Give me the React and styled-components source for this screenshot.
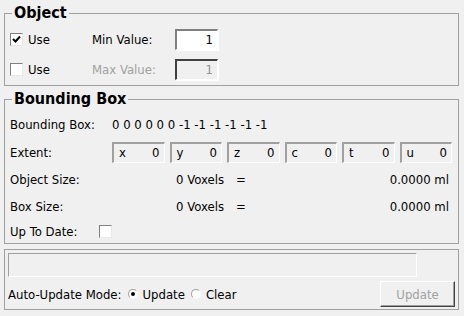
import styled, { createGlobalStyle } from "styled-components";

const GlobalStyle = createGlobalStyle`
  html, body {
    margin: 0;
    background: #f0f0f0;
  }
  body {
    font-family: "DejaVu Sans Condensed", "DejaVu Sans", Tahoma, sans-serif;
    font-size: 13px;
    color: #000;
  }
`;

const EXTENT = ["x", "y", "z", "c", "t", "u"];

function CheckBox({ checked }) {
  return (
    <Check>
      {checked && (
        <svg width="9" height="9" viewBox="0 0 9 9">
          <path d="M1 4 L3.5 6.5 L8 1.5" fill="none" stroke="#000" strokeWidth="2" />
        </svg>
      )}
    </Check>
  );
}

function App() {
  return (
    <Page>
      <GlobalStyle />

      <Group $pad="7px 5px 5px 5px" $gap={4}>
        <Legend>Object</Legend>
        <FormRow>
          <UseCell>
            <CheckBox checked />
            <span>Use</span>
          </UseCell>
          <FieldLabel>Min Value:</FieldLabel>
          <NumInput>1</NumInput>
        </FormRow>
        <FormRow>
          <UseCell>
            <CheckBox />
            <span>Use</span>
          </UseCell>
          <FieldLabel $disabled>Max Value:</FieldLabel>
          <NumInput $disabled>1</NumInput>
        </FormRow>
      </Group>

      <Group $pad="2px 5px 0 5px" $gap={5}>
        <Legend>Bounding Box</Legend>
        <InfoRow $h={28}>
          <RowLabel>Bounding Box:</RowLabel>
          <span>0 0 0 0 0 0 -1 -1 -1 -1 -1 -1</span>
        </InfoRow>
        <InfoRow $h={28}>
          <RowLabel>Extent:</RowLabel>
          <ExtentGrid>
            {EXTENT.map((k) => (
              <ExtentBox key={k}>
                <span>{k}</span>
                <span>0</span>
              </ExtentBox>
            ))}
          </ExtentGrid>
        </InfoRow>
        <InfoRow $h={27}>
          <RowLabel>Object Size:</RowLabel>
          <Voxels>0 Voxels</Voxels>
          <Equals>=</Equals>
          <Volume>0.0000 ml</Volume>
        </InfoRow>
        <InfoRow $h={26}>
          <RowLabel>Box Size:</RowLabel>
          <Voxels>0 Voxels</Voxels>
          <Equals>=</Equals>
          <Volume>0.0000 ml</Volume>
        </InfoRow>
        <InfoRow $h={24}>
          <RowLabel $w={89}>Up To Date:</RowLabel>
          <CheckBox />
        </InfoRow>
      </Group>

      <Group $pad="3px 3px 2px 3px">
        <Progress />
        <BottomRow>
          <span>Auto-Update Mode:</span>
          <RadioOption>
            <Radio $on />
            <span>Update</span>
          </RadioOption>
          <RadioOption>
            <Radio />
            <span>Clear</span>
          </RadioOption>
          <Button disabled>Update</Button>
        </BottomRow>
      </Group>
    </Page>
  );
}

const Page = styled.div`
  width: 464px;
  height: 316px;
  box-sizing: border-box;
  padding: 4px 5px 0 4px;
  display: flex;
  flex-direction: column;
`;

const Group = styled.fieldset`
  margin: 0 0 ${(p) => p.$gap || 0}px 0;
  padding: ${(p) => p.$pad};
  border: 1px solid #a0a0a0;
  min-width: 0;
`;

const Legend = styled.legend`
  font-size: 16px;
  font-weight: bold;
  line-height: 18px;
  padding: 0 2px;
  margin-left: 2px;
`;

const FormRow = styled.div`
  display: flex;
  align-items: center;
  height: 21px;
  & + & {
    margin-top: 9px;
  }
`;

const UseCell = styled.div`
  width: 82px;
  display: flex;
  align-items: center;
  gap: 5px;
`;

const Check = styled.span`
  width: 13px;
  height: 13px;
  box-sizing: border-box;
  background: #fff;
  border: 1px solid;
  border-color: #808080 #e8e8e8 #e8e8e8 #808080;
  display: inline-flex;
  align-items: center;
  justify-content: center;
  flex-shrink: 0;
`;

const FieldLabel = styled.span`
  width: 83px;
  color: ${(p) => (p.$disabled ? "#a0a0a0" : "#000")};
`;

const NumInput = styled.div`
  width: 43px;
  height: 21px;
  box-sizing: border-box;
  background: ${(p) => (p.$disabled ? "#f0f0f0" : "#fff")};
  color: ${(p) => (p.$disabled ? "#909090" : "#000")};
  border-style: solid;
  border-width: 2px 1px 1px 2px;
  border-color: ${(p) =>
    p.$disabled ? "#404040 #fff #fff #404040" : "#808080 #fff #fff #808080"};
  box-shadow: 1px 1px 0 #fff;
  text-align: right;
  padding-right: 4px;
  line-height: 18px;
`;

const InfoRow = styled.div`
  display: flex;
  align-items: center;
  height: ${(p) => p.$h}px;
`;

const RowLabel = styled.span`
  width: ${(p) => p.$w || 102}px;
  flex-shrink: 0;
`;

const ExtentGrid = styled.div`
  flex: 1;
  display: grid;
  grid-template-columns: repeat(6, 1fr);
  gap: 5px;
  margin-right: 1px;
`;

const ExtentBox = styled.div`
  height: 21px;
  box-sizing: border-box;
  display: flex;
  justify-content: space-between;
  align-items: center;
  padding: 0 4px 0 5px;
  border-style: solid;
  border-width: 2px 1px 1px 2px;
  border-color: #a0a0a0 #fff #fff #a0a0a0;
`;

const Voxels = styled.span`
  width: 112px;
  text-align: right;
`;

const Equals = styled.span`
  margin-left: 12px;
`;

const Volume = styled.span`
  flex: 1;
  text-align: right;
  margin-right: 4px;
`;

const Progress = styled.div`
  height: 24px;
  width: 409px;
  box-sizing: border-box;
  border: 1px solid;
  border-color: #a0a0a0 #fff #fff #a0a0a0;
`;

const BottomRow = styled.div`
  display: flex;
  align-items: center;
  margin-top: 4px;
  height: 26px;
`;

const RadioOption = styled.label`
  display: flex;
  align-items: center;
  gap: 5px;
  margin-left: 6px;
`;

const Radio = styled.span`
  width: 10px;
  height: 10px;
  box-sizing: border-box;
  border-radius: 50%;
  background: #fff;
  border: 1px solid;
  border-color: #a0a0a0 #f8f8f8 #f8f8f8 #a0a0a0;
  display: inline-flex;
  align-items: center;
  justify-content: center;
  &::after {
    content: "";
    width: 4px;
    height: 4px;
    border-radius: 50%;
    background: ${(p) => (p.$on ? "#000" : "transparent")};
  }
`;

const Button = styled.button`
  margin-left: auto;
  width: 75px;
  height: 26px;
  box-sizing: border-box;
  font: inherit;
  color: #a0a0a0;
  background: #f0f0f0;
  border: 1px solid;
  border-color: #fff #404040 #404040 #fff;
  box-shadow: inset -1px -1px #a0a0a0;
  padding: 0;
`;

export default App;
